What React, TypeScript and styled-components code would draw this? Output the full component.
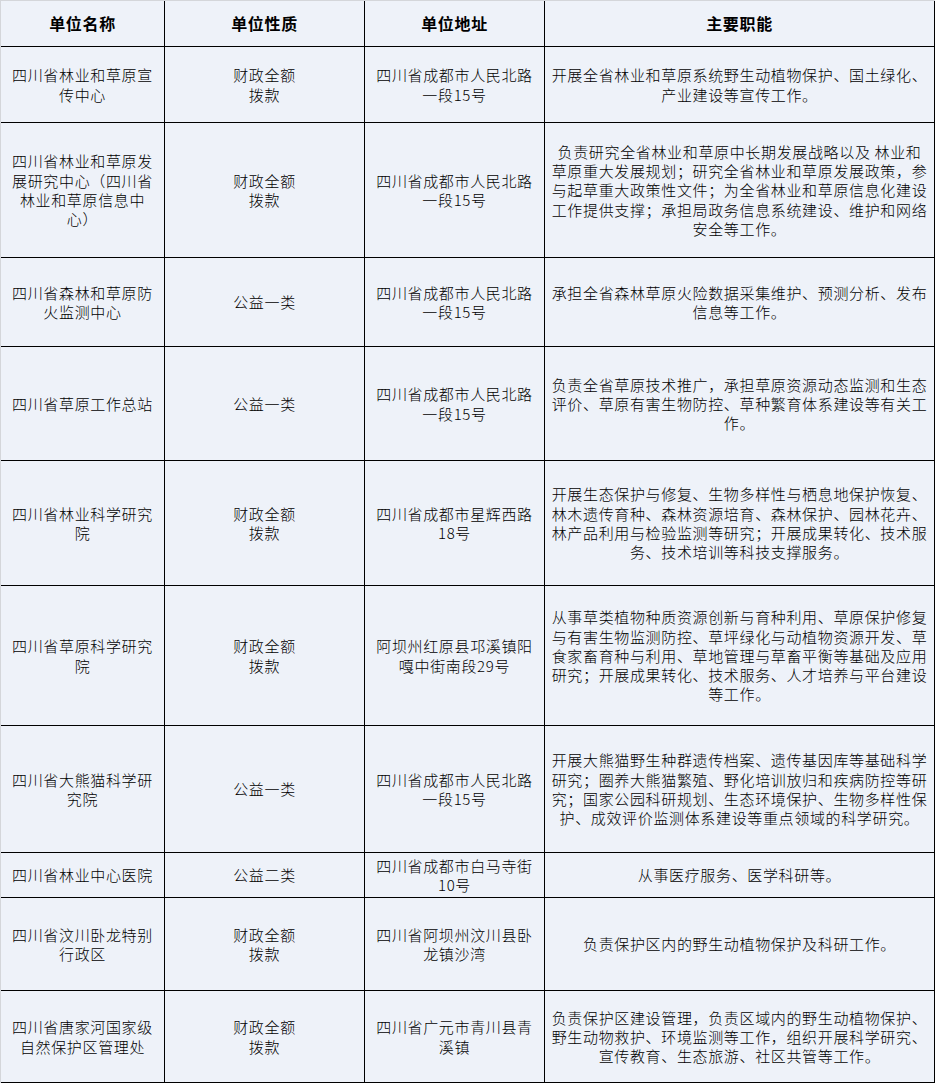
import React from "react";
import styled, { createGlobalStyle } from "styled-components";

const Global = createGlobalStyle`
  html, body {
    margin: 0;
    padding: 0;
    background: #eef2f9;
  }
  body {
    font-family: "Noto Sans CJK SC", "Noto Sans", sans-serif;
    color: #000;
  }
`;

const Table = styled.div`
  width: 935px;
  box-sizing: border-box;
  border-top: 1px solid #d4d6da;
  border-left: 1px solid #d4d6da;
  display: flex;
  flex-direction: column;
  background: #eef2f9;
`;

const Row = styled.div<{ $h: number }>`
  display: grid;
  grid-template-columns: 164px 200px 180px 390px;
  height: ${(p) => p.$h}px;
`;

const Cell = styled.div<{ $head?: boolean }>`
  box-sizing: border-box;
  border-right: 1px solid #000;
  border-bottom: 1px solid #000;
  display: flex;
  flex-direction: column;
  align-items: center;
  justify-content: center;
  text-align: center;
  padding: 0 1px;
  font-size: ${(p) => (p.$head ? "16px" : "15px")};
  font-weight: ${(p) => (p.$head ? 700 : 300)};
  letter-spacing: 0.65px;
  line-height: 19.3px;
  overflow: hidden;
`;

const Line = styled.span`
  display: block;
  white-space: pre;
`;

type RowData = { h: number; cols: string[][] };

const rows: RowData[] = [
  {
    h: 76,
    cols: [
      ["四川省林业和草原宣", "传中心"],
      ["财政全额", "拨款"],
      ["四川省成都市人民北路", "一段15号"],
      ["开展全省林业和草原系统野生动植物保护、国土绿化、", "产业建设等宣传工作。"],
    ],
  },
  {
    h: 135,
    cols: [
      ["四川省林业和草原发", "展研究中心（四川省", "林业和草原信息中", "心）"],
      ["财政全额", "拨款"],
      ["四川省成都市人民北路", "一段15号"],
      [
        "负责研究全省林业和草原中长期发展战略以及 林业和",
        "草原重大发展规划；研究全省林业和草原发展政策，参",
        "与起草重大政策性文件；为全省林业和草原信息化建设",
        "工作提供支撑；承担局政务信息系统建设、维护和网络",
        "安全等工作。",
      ],
    ],
  },
  {
    h: 89,
    cols: [
      ["四川省森林和草原防", "火监测中心"],
      ["公益一类"],
      ["四川省成都市人民北路", "一段15号"],
      ["承担全省森林草原火险数据采集维护、预测分析、发布", "信息等工作。"],
    ],
  },
  {
    h: 114,
    cols: [
      ["四川省草原工作总站"],
      ["公益一类"],
      ["四川省成都市人民北路", "一段15号"],
      [
        "负责全省草原技术推广，承担草原资源动态监测和生态",
        "评价、草原有害生物防控、草种繁育体系建设等有关工",
        "作。",
      ],
    ],
  },
  {
    h: 125,
    cols: [
      ["四川省林业科学研究", "院"],
      ["财政全额", "拨款"],
      ["四川省成都市星辉西路", "18号"],
      [
        "开展生态保护与修复、生物多样性与栖息地保护恢复、",
        "林木遗传育种、森林资源培育、森林保护、园林花卉、",
        "林产品利用与检验监测等研究；开展成果转化、技术服",
        "务、技术培训等科技支撑服务。",
      ],
    ],
  },
  {
    h: 140,
    cols: [
      ["四川省草原科学研究", "院"],
      ["财政全额", "拨款"],
      ["阿坝州红原县邛溪镇阳", "嘎中街南段29号"],
      [
        "从事草类植物种质资源创新与育种利用、草原保护修复",
        "与有害生物监测防控、草坪绿化与动植物资源开发、草",
        "食家畜育种与利用、草地管理与草畜平衡等基础及应用",
        "研究；开展成果转化、技术服务、人才培养与平台建设",
        "等工作。",
      ],
    ],
  },
  {
    h: 127,
    cols: [
      ["四川省大熊猫科学研", "究院"],
      ["公益一类"],
      ["四川省成都市人民北路", "一段15号"],
      [
        "开展大熊猫野生种群遗传档案、遗传基因库等基础科学",
        "研究；圈养大熊猫繁殖、野化培训放归和疾病防控等研",
        "究；国家公园科研规划、生态环境保护、生物多样性保",
        "护、成效评价监测体系建设等重点领域的科学研究。",
      ],
    ],
  },
  {
    h: 45,
    cols: [
      ["四川省林业中心医院"],
      ["公益二类"],
      ["四川省成都市白马寺街", "10号"],
      ["从事医疗服务、医学科研等。"],
    ],
  },
  {
    h: 93,
    cols: [
      ["四川省汶川卧龙特别", "行政区"],
      ["财政全额", "拨款"],
      ["四川省阿坝州汶川县卧", "龙镇沙湾"],
      ["负责保护区内的野生动植物保护及科研工作。"],
    ],
  },
  {
    h: 92,
    cols: [
      ["四川省唐家河国家级", "自然保护区管理处"],
      ["财政全额", "拨款"],
      ["四川省广元市青川县青", "溪镇"],
      [
        "负责保护区建设管理，负责区域内的野生动植物保护、",
        "野生动物救护、环境监测等工作，组织开展科学研究、",
        "宣传教育、生态旅游、社区共管等工作。",
      ],
    ],
  },
];

const headers = ["单位名称", "单位性质", "单位地址", "主要职能"];

export default function App() {
  return (
    <>
      <Global />
      <Table>
        <Row $h={46}>
          {headers.map((h) => (
            <Cell key={h} $head>
              {h}
            </Cell>
          ))}
        </Row>
        {rows.map((r, i) => (
          <Row key={i} $h={r.h}>
            {r.cols.map((lines, j) => (
              <Cell key={j}>
                {lines.map((l, k) => (
                  <Line key={k}>{l}</Line>
                ))}
              </Cell>
            ))}
          </Row>
        ))}
      </Table>
    </>
  );
}
